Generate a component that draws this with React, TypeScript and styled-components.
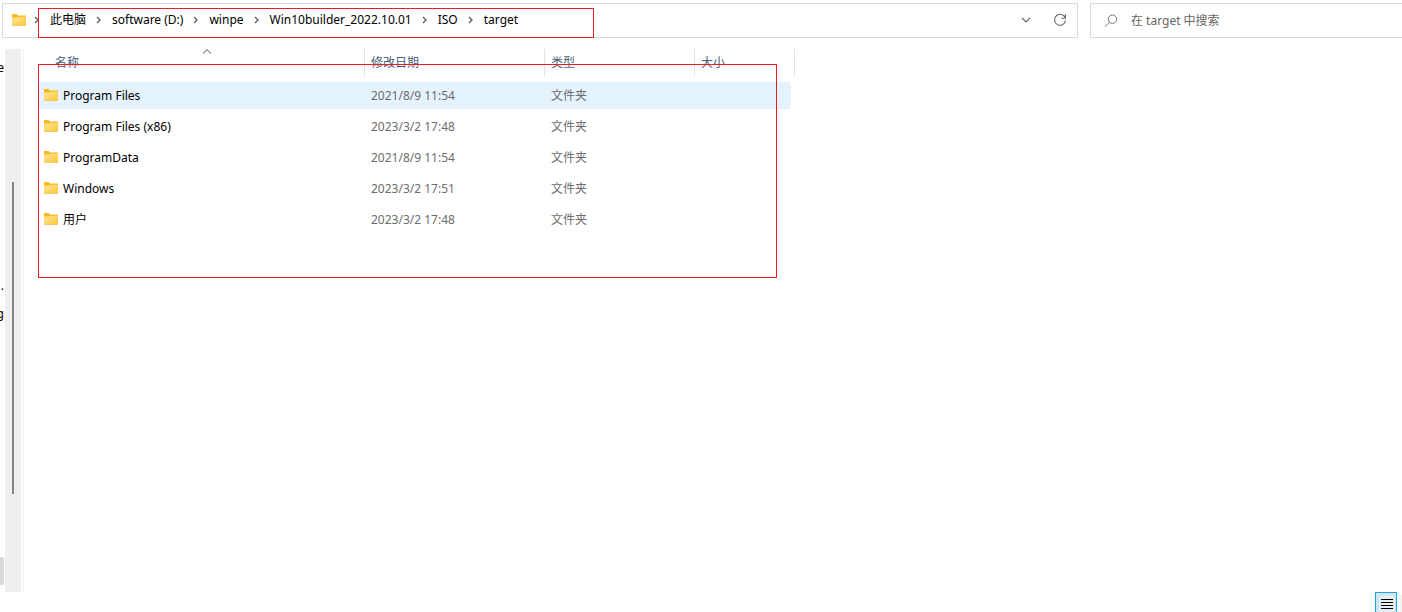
import React from "react";
import styled, { createGlobalStyle, css } from "styled-components";

const GlobalStyle = createGlobalStyle`
  * { box-sizing: border-box; }
  body {
    margin: 0;
    background: #fff;
    color: #000;
    font: 12px/16px "Noto Sans", "Noto Sans CJK SC", sans-serif;
    overflow: hidden;
  }
  button, input { font: inherit; color: inherit; }
`;

const Explorer = styled.div`
  display: flex;
  flex-direction: column;
  height: 100vh;
  overflow: hidden;
`;

const Toolbar = styled.header`
  display: flex;
  gap: 12px;
  padding: 3px 0 0 2px;
  margin-bottom: 11px;
`;

const barFrame = css`
  display: flex;
  align-items: center;
  height: 35px;
  border: 1px solid #d9d9d9;
`;

const AddressBar = styled.div`
  ${barFrame}
  position: relative;
  flex: 1;
  padding: 0 9px 1px;
`;

const SearchBox = styled.label`
  ${barFrame}
  width: 312px;
  border-right: 0;
  padding-left: 13px;
  gap: 13px;
`;

const SearchInput = styled.input`
  flex: 1;
  min-width: 0;
  border: 0;
  outline: 0;
  padding: 0;
  background: none;
  &::placeholder { color: #666; opacity: 1; }
`;

const Crumbs = styled.nav`
  display: flex;
  flex: 1;
  align-items: center;
  padding-left: 8px;
`;

const Crumb = styled.a`
  color: #000;
  text-decoration: none;
  white-space: nowrap;
`;

const Separator = styled.svg`
  width: 5px;
  height: 8px;
  margin: 0 11px 0 10px;
  flex: none;
`;

const LeadSeparator = styled(Separator)`
  margin-left: 0;
`;

const IconButton = styled.button`
  display: grid;
  place-items: center;
  width: 34px;
  height: 26px;
  padding: 0;
  border: 0;
  background: none;
`;

const RefreshButton = styled(IconButton)`
  margin-right: -9px;
`;

const Body = styled.div`
  display: flex;
  flex: 1;
  min-height: 0;
`;

const Tree = styled.nav`
  display: flex;
  flex-direction: column;
  width: 5px;
  padding: 5px 1px 7px 0;
  overflow: hidden;
`;

const TreeItem = styled.a<{ $selected?: boolean; $spaced?: boolean }>`
  display: flex;
  flex: none;
  justify-content: flex-end;
  align-items: center;
  height: 28px;
  color: #000;
  text-decoration: none;
  overflow: hidden;
  ${(p) => p.$spaced && "margin-top: 190px;"}
  ${(p) => p.$selected && "margin-top: auto; background: #d9d9d9; border-radius: 0 2px 2px 0;"}
`;

const ScrollTrack = styled.div`
  display: flex;
  justify-content: center;
  width: 16px;
  background: #efefef;
  padding-top: 133px;
`;

const ScrollThumb = styled.div`
  width: 2px;
  height: 312px;
  background: #858585;
`;

const Content = styled.main`
  position: relative;
  flex: 1;
  margin-left: 2px;
  border-left: 1px solid #f3f3f3;
  padding-left: 15px;
`;

const FileTable = styled.table`
  table-layout: fixed;
  width: 756px;
  margin-top: -4px;
  border-collapse: separate;
  border-spacing: 0 4px;
`;

const HeadCell = styled.th<{ $width: number }>`
  width: ${(p) => p.$width}px;
  height: 29px;
  padding: 0;
  vertical-align: top;
  font-weight: 400;
`;

const SortButton = styled.button<{ $first?: boolean }>`
  position: relative;
  display: block;
  width: ${(p) => (p.$first ? "calc(100% - 9px)" : "100%")};
  height: 27px;
  margin-left: ${(p) => (p.$first ? "9px" : "0")};
  padding: 0 0 0 ${(p) => (p.$first ? "7px" : "6px")};
  border: 0;
  border-right: 1px solid #e2e2e2;
  background: none;
  color: #4c607a;
  text-align: left;
`;

const SortMark = styled.svg`
  position: absolute;
  top: 0;
  left: 50%;
  width: 10px;
  height: 5px;
  margin-left: -4px;
`;

const Cell = styled.td`
  height: 27px;
  padding: 0 0 0 6px;
  color: #6d6d6d;
  &:last-child {
    border-right: 4px solid transparent;
    background-clip: padding-box;
    border-radius: 0 6px 6px 0;
  }
`;

const NameCell = styled(Cell)`
  padding-left: 5px;
`;

const Row = styled.tr<{ $active?: boolean }>`
  ${Cell} { background-color: ${(p) => (p.$active ? "#e5f3ff" : "transparent")}; }
`;

const FileLink = styled.a`
  display: flex;
  align-items: flex-start;
  gap: 5px;
  color: #000;
  text-decoration: none;
  & > svg { margin-top: 1px; }
`;

const Marker = styled.div`
  position: absolute;
  border: 1px solid #ed1c24;
  pointer-events: none;
`;

const PathMarker = styled(Marker)`
  top: 4px;
  left: 35px;
  width: 556px;
  height: 30px;
`;

const ListMarker = styled(Marker)`
  top: 15px;
  left: 14px;
  width: 739px;
  height: 214px;
`;

const StatusBar = styled.footer`
  display: flex;
  justify-content: flex-end;
  gap: 3px;
  height: 20px;
  overflow: hidden;
`;

const ViewButton = styled.button<{ $active?: boolean }>`
  display: flex;
  flex: none;
  justify-content: center;
  width: ${(p) => (p.$active ? "22px" : "2px")};
  height: 22px;
  padding: ${(p) => (p.$active ? "3px 0 0 2px" : "0")};
  overflow: hidden;
  border: ${(p) => (p.$active ? "1px solid #26a0da" : "0")};
  background: ${(p) => (p.$active ? "#cbe8f6" : "linear-gradient(#fff 3px, #f3f3f3 3px)")};
`;

const FolderIcon = ({ id }: { id: string }) => (
  <svg width="14" height="12" viewBox="0 0 14 12" aria-hidden="true">
    <defs>
      <linearGradient id={id} x1="0" y1="0" x2="1" y2="1">
        <stop offset="0" stopColor="#ffe597" />
        <stop offset="1" stopColor="#ffc631" />
      </linearGradient>
    </defs>
    <path d="M0 .6Q0 0 .6 0H4.6L6 1.6H13.4Q14 1.6 14 2.2V5H0Z" fill="#f9b81f" />
    <path d="M0 3.6H5L6.2 2.8H14V11.4Q14 12 13.4 12H.6Q0 12 0 11.4Z" fill={`url(#${id})`} />
    <path d="M0 11H14V11.4Q14 12 13.4 12H.6Q0 12 0 11.4Z" fill="#efc675" opacity="0.7" />
  </svg>
);

const SeparatorPath = () => <path d="M1 1L4 4L1 7" fill="none" stroke="#5c5c5c" strokeWidth="1.3" />;

const path = ["此电脑", "software (D:)", "winpe", "Win10builder_2022.10.01", "ISO", "target"];

const files = [
  { name: "Program Files", date: "2021/8/9 11:54" },
  { name: "Program Files (x86)", date: "2023/3/2 17:48" },
  { name: "ProgramData", date: "2021/8/9 11:54" },
  { name: "Windows", date: "2023/3/2 17:51" },
  { name: "用户", date: "2023/3/2 17:48" },
];

const columns = [
  { title: "名称", width: 326 },
  { title: "修改日期", width: 180 },
  { title: "类型", width: 150 },
  { title: "大小", width: 100 },
];

export default function App() {
  return (
    <>
      <GlobalStyle />
      <Explorer>
        <Toolbar>
          <AddressBar>
            <FolderIcon id="folder-path" />
            <Crumbs aria-label="Path">
              <LeadSeparator viewBox="0 0 5 8"><SeparatorPath /></LeadSeparator>
              {path.map((part, i) => (
                <React.Fragment key={part}>
                  {i > 0 && <Separator viewBox="0 0 5 8"><SeparatorPath /></Separator>}
                  <Crumb href="#">{part}</Crumb>
                </React.Fragment>
              ))}
            </Crumbs>
            <IconButton aria-label="History">
              <svg width="10" height="6" viewBox="0 0 10 6">
                <path d="M1 1L5 5L9 1" fill="none" stroke="#666" strokeWidth="1.1" />
              </svg>
            </IconButton>
            <RefreshButton aria-label="Refresh">
              <svg width="14" height="14" viewBox="0 0 14 14" fill="none" stroke="#666" strokeWidth="1.1">
                <path d="M12.3 5.2A5.5 5.5 0 1 0 12.5 7.4" />
                <path d="M12.4 1.2V5.2H8.4" />
              </svg>
            </RefreshButton>
            <PathMarker />
          </AddressBar>
          <SearchBox>
            <svg width="14" height="14" viewBox="0 0 14 14" fill="none" stroke="#777" strokeWidth="1">
              <circle cx="8.5" cy="5.2" r="4.2" />
              <path d="M5.5 8.2L1 12.8" />
            </svg>
            <SearchInput type="search" placeholder="在 target 中搜索" aria-label="Search" />
          </SearchBox>
        </Toolbar>
        <Body>
          <Tree aria-label="Folders">
            <TreeItem href="#">e</TreeItem>
            <TreeItem href="#" $spaced>.</TreeItem>
            <TreeItem href="#">g</TreeItem>
            <TreeItem href="#" $selected aria-label="Drive" />
          </Tree>
          <ScrollTrack><ScrollThumb /></ScrollTrack>
          <Content>
            <FileTable>
              <thead>
                <tr>
                  {columns.map((c, i) => (
                    <HeadCell key={c.title} $width={c.width}>
                      <SortButton $first={i === 0}>
                        {c.title}
                        {i === 0 && (
                          <SortMark viewBox="0 0 10 5">
                            <path d="M1 4.5L5 0.7L9 4.5" fill="none" stroke="#555" />
                          </SortMark>
                        )}
                      </SortButton>
                    </HeadCell>
                  ))}
                </tr>
              </thead>
              <tbody>
                {files.map((f, i) => (
                  <Row key={f.name} $active={i === 0}>
                    <NameCell>
                      <FileLink href="#"><FolderIcon id={`folder-${i}`} />{f.name}</FileLink>
                    </NameCell>
                    <Cell>{f.date}</Cell>
                    <Cell>文件夹</Cell>
                    <Cell />
                  </Row>
                ))}
              </tbody>
            </FileTable>
            <ListMarker />
          </Content>
        </Body>
        <StatusBar>
          <ViewButton $active aria-label="Details">
            <svg width="16" height="17" viewBox="0 0 16 17">
              <rect width="16" height="17" rx="1" fill="#e3eef3" />
              <path d="M2 3.5H14M2 6.5H14M2 9.5H14M2 12.5H14" stroke="#000" />
            </svg>
          </ViewButton>
          <ViewButton aria-label="Large icons" />
        </StatusBar>
      </Explorer>
    </>
  );
}
